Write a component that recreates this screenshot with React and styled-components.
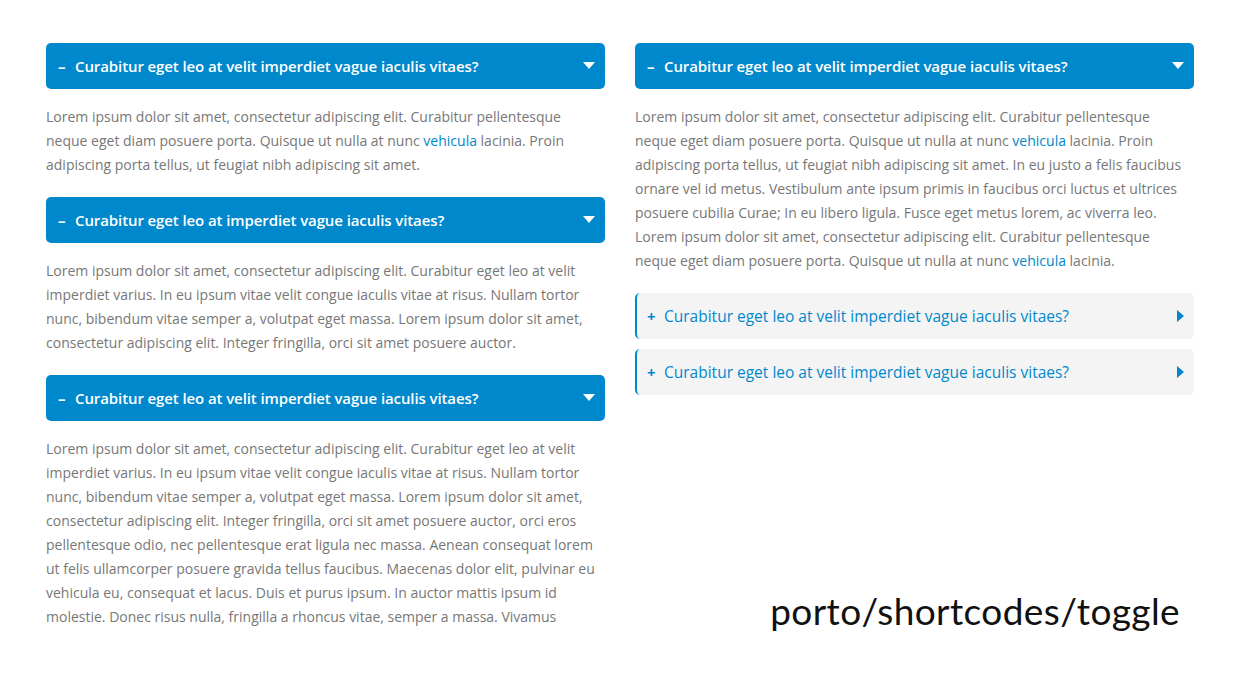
import React from 'react'
import styled, { createGlobalStyle } from 'styled-components'

const GlobalStyle = createGlobalStyle`
  html, body {
    margin: 0;
    padding: 0;
    background: #fff;
  }
  body {
    font-family: "Open Sans", "Liberation Sans", sans-serif;
  }
`

const Page = styled.div`
  width: 1246px;
  height: 684px;
  box-sizing: border-box;
  padding: 43px 52px 0 46px;
  display: grid;
  grid-template-columns: 559px 559px;
  column-gap: 30px;
  align-items: stretch;
  overflow: hidden;
`

const Column = styled.div`
  display: flex;
  flex-direction: column;
`

const Toggle = styled.section`
  margin-bottom: ${p => (p.$open ? '20px' : '10px')};
`

const Header = styled.div`
  height: 46px;
  box-sizing: border-box;
  display: flex;
  align-items: center;
  padding: 0 10px 1px ${p => (p.$open ? '12px' : '10px')};
  border-radius: 5px;
  background: ${p => (p.$open ? '#0088cc' : '#f4f4f4')};
  border-left: ${p => (p.$open ? 'none' : '2px solid #0088cc')};
  color: ${p => (p.$open ? '#fff' : '#0088cc')};
  font-size: ${p => (p.$open ? '15px' : '15.5px')};
  font-weight: ${p => (p.$open ? 600 : 400)};
  cursor: pointer;
`

const Sign = styled.span`
  width: 17px;
  flex: none;
  font-weight: 700;
  font-size: 15px;
`

const Title = styled.span`
  flex: 1;
  white-space: nowrap;
  letter-spacing: ${p => (p.$open ? '-0.1px' : '0')};
`

const Body = styled.p`
  margin: 0;
  padding-top: 16px;
  color: #777;
  font-size: 14px;
  line-height: 24px;
`

const Link = styled.a`
  color: #0088cc;
  text-decoration: none;
`

const Stamp = styled.div`
  margin-top: auto;
  align-self: flex-end;
  margin-bottom: 51px;
  margin-right: 14px;
  font-family: Lato, "DejaVu Sans", sans-serif;
  font-weight: 400;
  font-size: 37px;
  color: #111;
  letter-spacing: 0.4px;
`

const Caret = ({ open }) =>
  open ? (
    <svg width="12" height="7" viewBox="0 0 12 7">
      <path d="M0 0h12L6 7z" fill="#fff" />
    </svg>
  ) : (
    <svg width="7" height="12" viewBox="0 0 7 12">
      <path d="M0 0l7 6-7 6z" fill="#0088cc" />
    </svg>
  )

const Item = ({ open, title, children }) => (
  <Toggle $open={open}>
    <Header $open={open}>
      <Sign>{open ? '–' : '+'}</Sign>
      <Title $open={open}>{title}</Title>
      <Caret open={open} />
    </Header>
    {open && <Body>{children}</Body>}
  </Toggle>
)

const App = () => {
  return (
    <>
      <GlobalStyle />
      <Page>
        <Column>
          <Item open title="Curabitur eget leo at velit imperdiet vague iaculis vitaes?">
            Lorem ipsum dolor sit amet, consectetur adipiscing elit. Curabitur pellentesque neque eget diam
            posuere porta. Quisque ut nulla at nunc <Link href="#">vehicula</Link> lacinia. Proin adipiscing
            porta tellus, ut feugiat nibh adipiscing sit amet.
          </Item>
          <Item open title="Curabitur eget leo at imperdiet vague iaculis vitaes?">
            Lorem ipsum dolor sit amet, consectetur adipiscing elit. Curabitur eget leo at velit imperdiet
            varius. In eu ipsum vitae velit congue iaculis vitae at risus. Nullam tortor nunc, bibendum vitae
            semper a, volutpat eget massa. Lorem ipsum dolor sit amet, consectetur adipiscing elit. Integer
            fringilla, orci sit amet posuere auctor.
          </Item>
          <Item open title="Curabitur eget leo at velit imperdiet vague iaculis vitaes?">
            Lorem ipsum dolor sit amet, consectetur adipiscing elit. Curabitur eget leo at velit imperdiet
            varius. In eu ipsum vitae velit congue iaculis vitae at risus. Nullam tortor nunc, bibendum vitae
            semper a, volutpat eget massa. Lorem ipsum dolor sit amet, consectetur adipiscing elit. Integer
            fringilla, orci sit amet posuere auctor, orci eros pellentesque odio, nec pellentesque erat ligula
            nec massa. Aenean consequat lorem ut felis ullamcorper posuere gravida tellus faucibus. Maecenas
            dolor elit, pulvinar eu vehicula eu, consequat et lacus. Duis et purus ipsum. In auctor mattis
            ipsum id molestie. Donec risus nulla, fringilla a rhoncus vitae, semper a massa. Vivamus
          </Item>
        </Column>
        <Column>
          <Item open title="Curabitur eget leo at velit imperdiet vague iaculis vitaes?">
            Lorem ipsum dolor sit amet, consectetur adipiscing elit. Curabitur pellentesque neque eget diam
            posuere porta. Quisque ut nulla at nunc <Link href="#">vehicula</Link> lacinia. Proin adipiscing
            porta tellus, ut feugiat nibh adipiscing sit amet. In eu justo a felis faucibus ornare vel id
            metus. Vestibulum ante ipsum primis in faucibus orci luctus et ultrices posuere cubilia Curae; In
            eu libero ligula. Fusce eget metus lorem, ac viverra leo. Lorem ipsum dolor sit amet, consectetur
            adipiscing elit. Curabitur pellentesque neque eget diam posuere porta. Quisque ut nulla at nunc{' '}
            <Link href="#">vehicula</Link> lacinia.
          </Item>
          <Item title="Curabitur eget leo at velit imperdiet vague iaculis vitaes?" />
          <Item title="Curabitur eget leo at velit imperdiet vague iaculis vitaes?" />
          <Stamp>porto/shortcodes/toggle</Stamp>
        </Column>
      </Page>
    </>
  )
}

export default App
